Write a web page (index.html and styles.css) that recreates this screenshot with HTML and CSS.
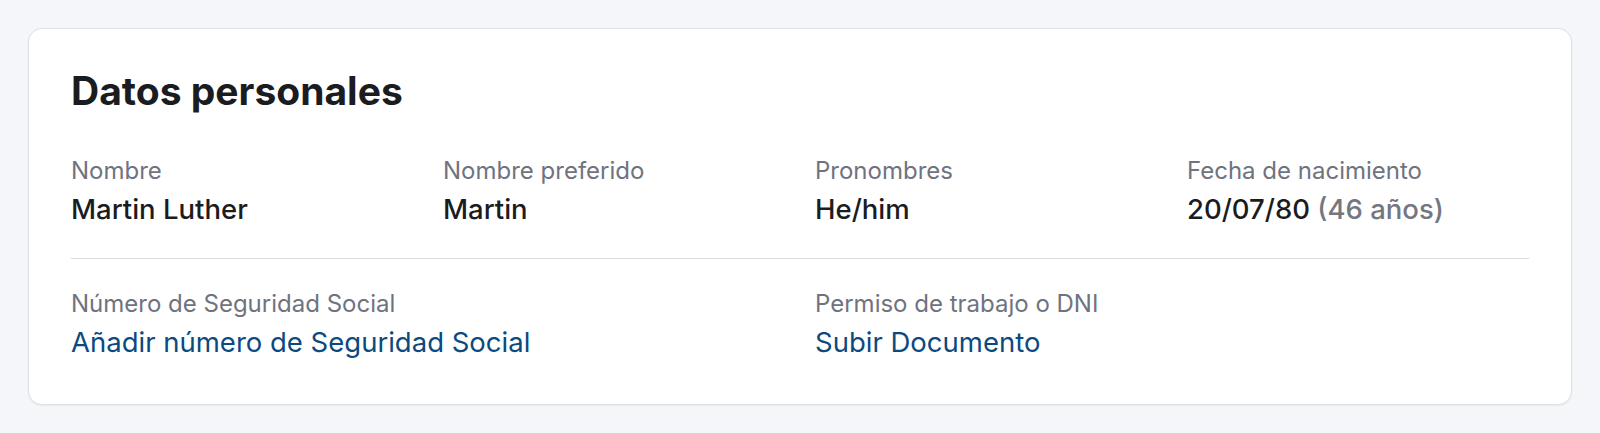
FILE: index.html
```html
<!DOCTYPE html>
<html lang="es">
<head>
<meta charset="utf-8">
<title>Datos personales</title>
<link rel="stylesheet" href="styles.css">
</head>
<body>
<main class="page">
  <section class="card">
    <h1 class="card-title">Datos personales</h1>
    <div class="fields fields-top">
      <div class="field">
        <div class="field-label">Nombre</div>
        <div class="field-value">Martin Luther</div>
      </div>
      <div class="field">
        <div class="field-label">Nombre preferido</div>
        <div class="field-value">Martin</div>
      </div>
      <div class="field">
        <div class="field-label">Pronombres</div>
        <div class="field-value">He/him</div>
      </div>
      <div class="field">
        <div class="field-label">Fecha de nacimiento</div>
        <div class="field-value">20/07/80 <span class="field-muted">(46 años)</span></div>
      </div>
    </div>
    <hr class="divider">
    <div class="fields fields-bottom">
      <div class="field field-wide">
        <div class="field-label">Número de Seguridad Social</div>
        <a class="field-link" href="#">Añadir número de Seguridad Social</a>
      </div>
      <div class="field field-wide">
        <div class="field-label">Permiso de trabajo o DNI</div>
        <a class="field-link" href="#">Subir Documento</a>
      </div>
    </div>
  </section>
</main>
</body>
</html>
```

FILE: styles.css
```css
* { box-sizing: border-box; }

html, body {
  margin: 0;
  padding: 0;
  background: #f5f6f9;
}

body {
  font-family: Inter, "Noto Sans", "Liberation Sans", sans-serif;
  color: #1b1c1f;
  -webkit-font-smoothing: antialiased;
}

.page {
  padding: 28px 28px;
}

.card {
  background: #ffffff;
  border: 1px solid #dfe1e6;
  border-radius: 14px;
  box-shadow: 0 1px 2px rgba(20, 24, 40, 0.06);
  padding: 39px 42px 44px 42px;
}

.card-title {
  margin: 0;
  font-size: 39px;
  line-height: 46px;
  font-weight: 700;
  letter-spacing: 0;
  color: #1b1c1f;
}

.fields {
  display: grid;
  grid-template-columns: repeat(4, 1fr);
  column-gap: 30px;
}

.fields-top {
  margin-top: 41px;
  padding-bottom: 31px;
}

.fields-bottom {
  padding-top: 29px;
}

.field-wide {
  grid-column: span 2;
}

.field {
  display: flex;
  flex-direction: column;
  gap: 4px;
  min-width: 0;
}

.field-label {
  font-size: 24px;
  line-height: 32px;
  font-weight: 400;
  color: #6f7380;
}

.field-value {
  font-size: 27.5px;
  line-height: 36px;
  font-weight: 500;
  color: #1b1c1f;
}

.field-muted {
  color: #74777f;
}

.field-link {
  font-size: 27.5px;
  line-height: 36px;
  font-weight: 400;
  color: #0b4a80;
  text-decoration: none;
  align-self: flex-start;
}

.divider {
  margin: 0;
  border: 0;
  height: 1px;
  background: #d9dbe0;
}
```
